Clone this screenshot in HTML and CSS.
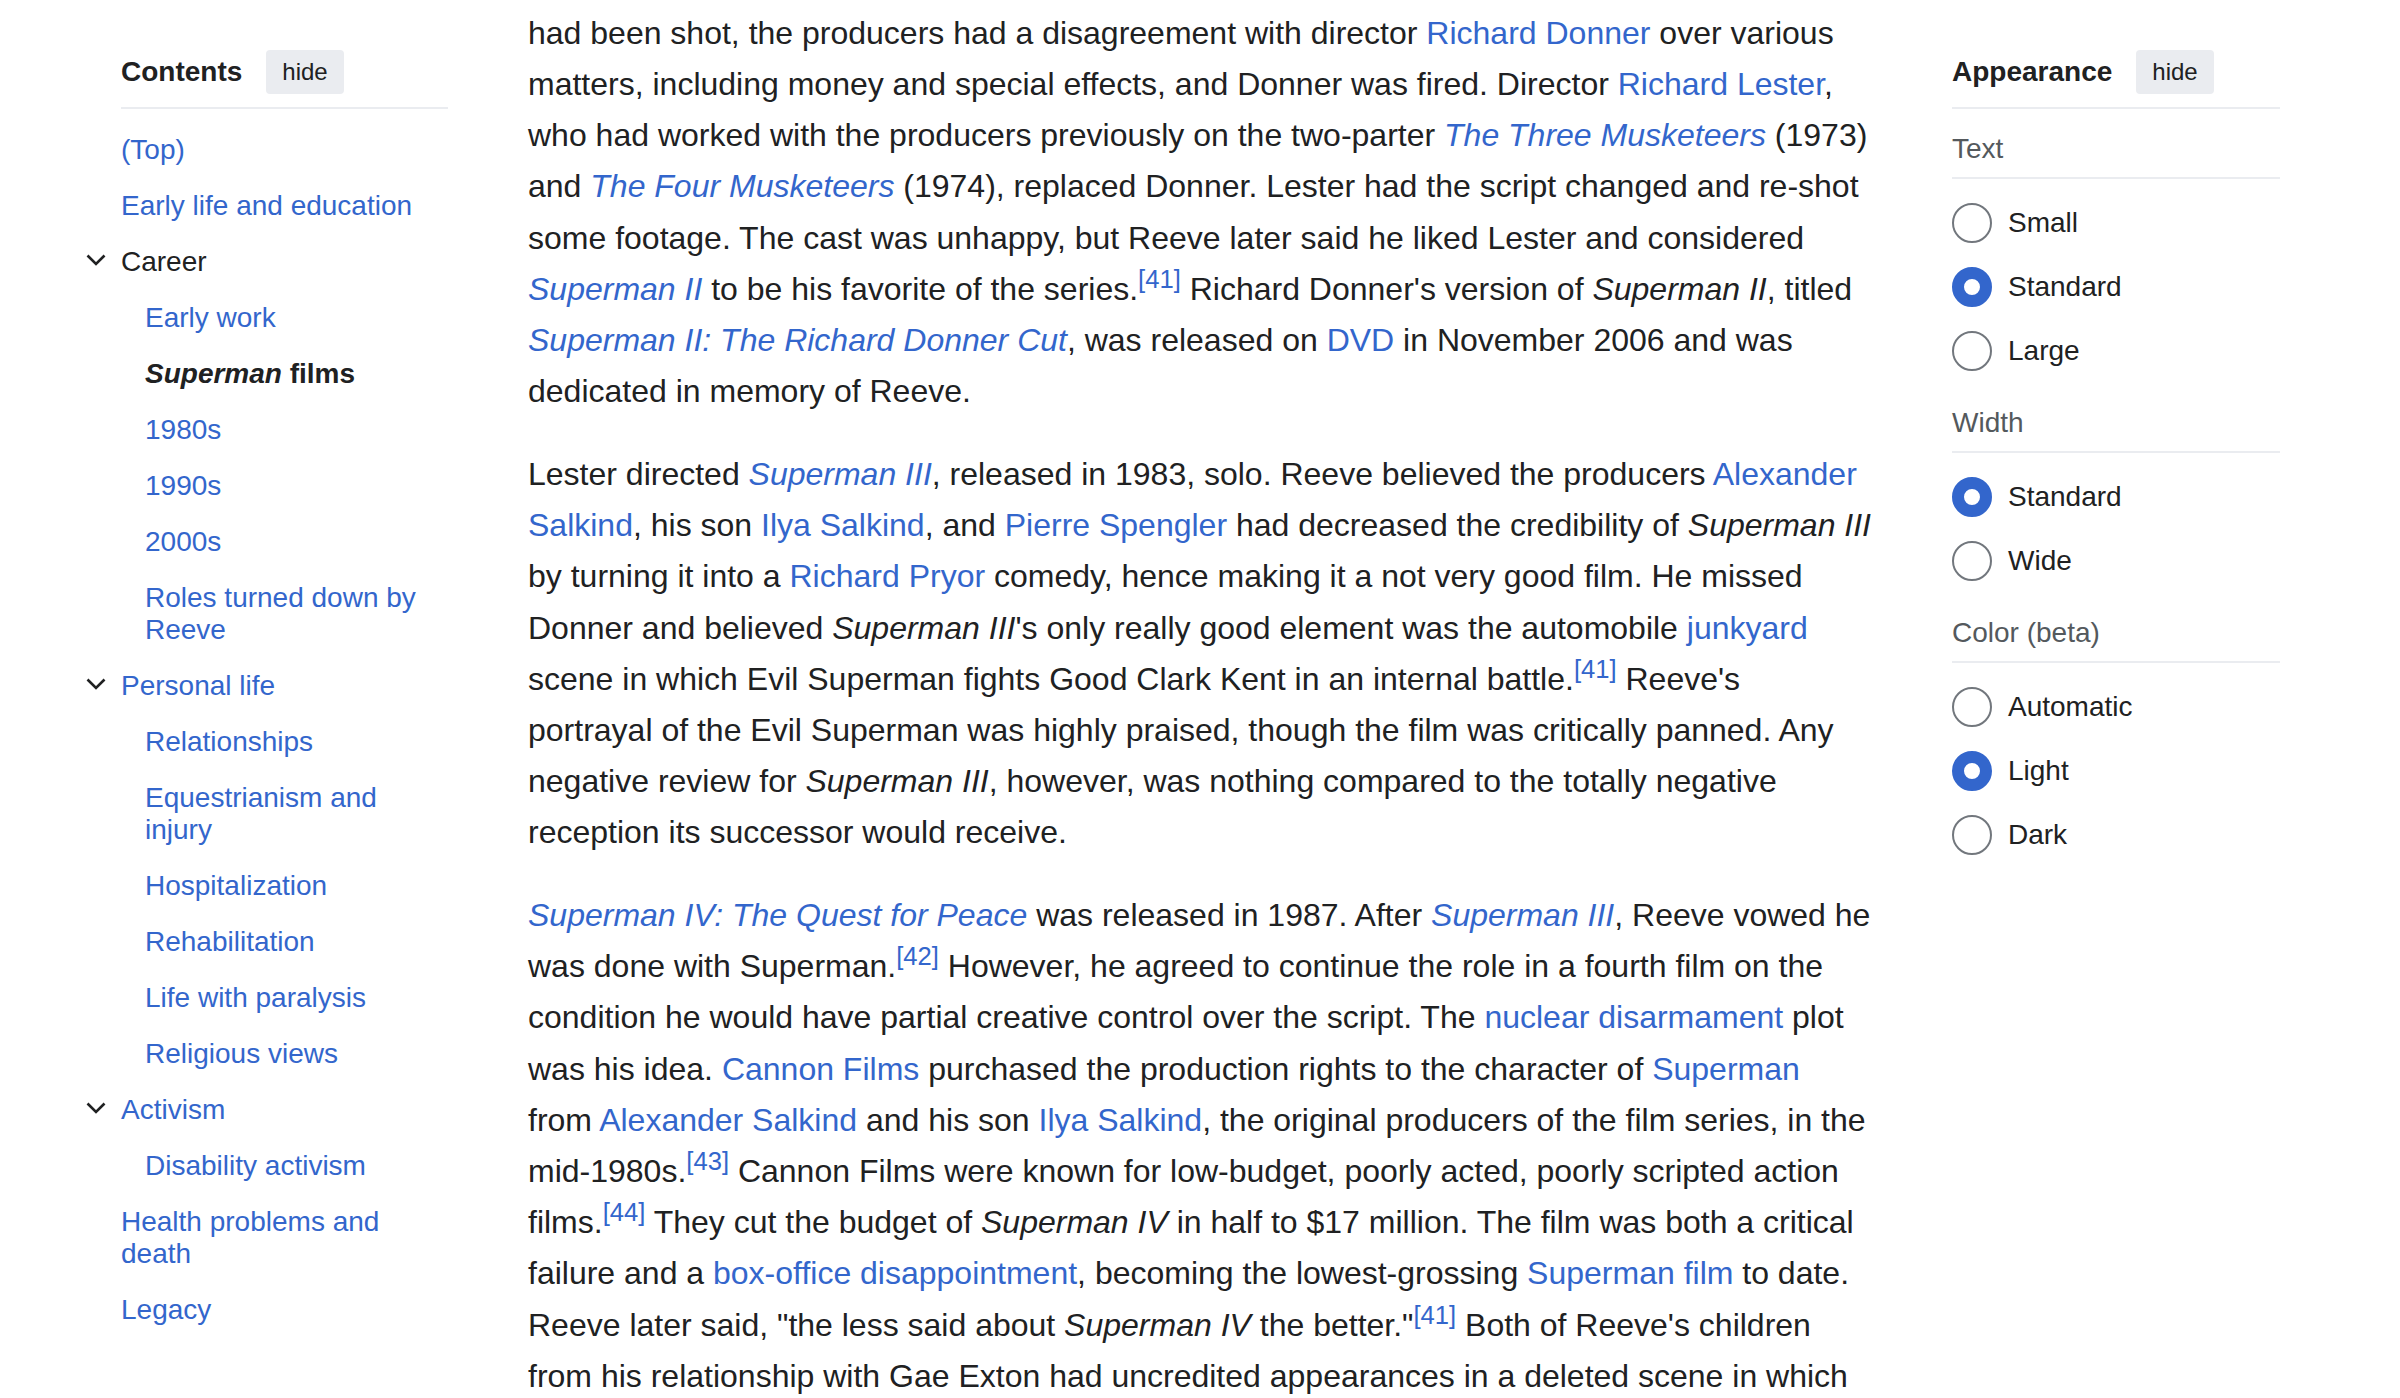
FILE: index.html
```html
<!DOCTYPE html>
<html lang="en">
<head>
<meta charset="utf-8">
<title>Christopher Reeve</title>
<link rel="stylesheet" href="styles.css">
</head>
<body>
<div class="page">
  <nav class="toc">
    <div class="panel-head toc-head">
      <span class="panel-title">Contents</span>
      <button class="hide-btn">hide</button>
    </div>
    <ul class="toc-list">
      <li><div class="toc-row"><span class="toc-toggle"></span><a class="toc-link" href="#">(Top)</a></div></li>
      <li><div class="toc-row"><span class="toc-toggle"></span><a class="toc-link" href="#">Early life and education</a></div></li>
      <li>
        <div class="toc-row"><span class="toc-toggle"><svg width="20" height="12" viewBox="0 0 20 12"><polyline points="1.5,1.5 10,10 18.5,1.5" fill="none" stroke="#202122" stroke-width="2.6"/></svg></span><a class="toc-link toc-parent" href="#">Career</a></div>
        <ul class="toc-sub">
          <li class="toc-row"><a class="toc-link" href="#">Early work</a></li>
          <li class="toc-row"><a class="toc-link toc-active" href="#"><i>Superman</i> films</a></li>
          <li class="toc-row"><a class="toc-link" href="#">1980s</a></li>
          <li class="toc-row"><a class="toc-link" href="#">1990s</a></li>
          <li class="toc-row"><a class="toc-link" href="#">2000s</a></li>
          <li class="toc-row"><a class="toc-link" href="#">Roles turned down by Reeve</a></li>
        </ul>
      </li>
      <li>
        <div class="toc-row"><span class="toc-toggle"><svg width="20" height="12" viewBox="0 0 20 12"><polyline points="1.5,1.5 10,10 18.5,1.5" fill="none" stroke="#202122" stroke-width="2.6"/></svg></span><a class="toc-link" href="#">Personal life</a></div>
        <ul class="toc-sub">
          <li class="toc-row"><a class="toc-link" href="#">Relationships</a></li>
          <li class="toc-row"><a class="toc-link" href="#">Equestrianism and injury</a></li>
          <li class="toc-row"><a class="toc-link" href="#">Hospitalization</a></li>
          <li class="toc-row"><a class="toc-link" href="#">Rehabilitation</a></li>
          <li class="toc-row"><a class="toc-link" href="#">Life with paralysis</a></li>
          <li class="toc-row"><a class="toc-link" href="#">Religious views</a></li>
        </ul>
      </li>
      <li>
        <div class="toc-row"><span class="toc-toggle"><svg width="20" height="12" viewBox="0 0 20 12"><polyline points="1.5,1.5 10,10 18.5,1.5" fill="none" stroke="#202122" stroke-width="2.6"/></svg></span><a class="toc-link" href="#">Activism</a></div>
        <ul class="toc-sub">
          <li class="toc-row"><a class="toc-link" href="#">Disability activism</a></li>
        </ul>
      </li>
      <li><div class="toc-row"><span class="toc-toggle"></span><a class="toc-link" href="#">Health problems and death</a></div></li>
      <li><div class="toc-row"><span class="toc-toggle"></span><a class="toc-link" href="#">Legacy</a></div></li>
    </ul>
  </nav>

  <main class="content">
    <p>had been shot, the producers had a disagreement with director <a href="#">Richard Donner</a> over various matters, including money and special effects, and Donner was fired. Director <a href="#">Richard Lester</a>, who had worked with the producers previously on the two-parter <a href="#"><i>The Three Musketeers</i></a> (1973) and <a href="#"><i>The Four Musketeers</i></a> (1974), replaced Donner. Lester had the script changed and re-shot some footage. The cast was unhappy, but Reeve later said he liked Lester and considered <a href="#"><i>Superman II</i></a> to be his favorite of the series.<sup class="ref"><a href="#">[41]</a></sup> Richard Donner's version of <i>Superman II</i>, titled <a href="#"><i>Superman II: The Richard Donner Cut</i></a>, was released on <a href="#">DVD</a> in November 2006 and was dedicated in memory of Reeve.</p>
    <p>Lester directed <a href="#"><i>Superman III</i></a>, released in 1983, solo. Reeve believed the producers <a href="#">Alexander Salkind</a>, his son <a href="#">Ilya Salkind</a>, and <a href="#">Pierre Spengler</a> had decreased the credibility of <i>Superman III</i> by turning it into a <a href="#">Richard Pryor</a> comedy, hence making it a not very good film. He missed Donner and believed <i>Superman III</i>'s only really good element was the automobile <a href="#">junkyard</a> scene in which Evil Superman fights Good Clark Kent in an internal battle.<sup class="ref"><a href="#">[41]</a></sup> Reeve's portrayal of the Evil Superman was highly praised, though the film was critically panned. Any negative review for <i>Superman III</i>, however, was nothing compared to the totally negative reception its successor would receive.</p>
    <p><a href="#"><i>Superman IV: The Quest for Peace</i></a> was released in 1987. After <a href="#"><i>Superman III</i></a>, Reeve vowed he was done with Superman.<sup class="ref"><a href="#">[42]</a></sup> However, he agreed to continue the role in a fourth film on the condition he would have partial creative control over the script. The <a href="#">nuclear disarmament</a> plot was his idea. <a href="#">Cannon Films</a> purchased the production rights to the character of <a href="#">Superman</a> from <a href="#">Alexander Salkind</a> and his son <a href="#">Ilya Salkind</a>, the original producers of the film series, in the mid-1980s.<sup class="ref"><a href="#">[43]</a></sup> Cannon Films were known for low-budget, poorly acted, poorly scripted action films.<sup class="ref"><a href="#">[44]</a></sup> They cut the budget of <i>Superman IV</i> in half to $17 million. The film was both a critical failure and a <a href="#">box-office disappointment</a>, becoming the lowest-grossing <a href="#">Superman film</a> to date. Reeve later said, "the less said about <i>Superman IV</i> the better."<sup class="ref"><a href="#">[41]</a></sup> Both of Reeve's children from his relationship with Gae Exton had uncredited appearances in a deleted scene in which</p>
  </main>

  <aside class="appearance">
    <div class="panel-head">
      <span class="panel-title">Appearance</span>
      <button class="hide-btn">hide</button>
    </div>
    <div class="group">
      <div class="group-label">Text</div>
      <ul class="options">
        <li class="option"><span class="radio"></span><span>Small</span></li>
        <li class="option"><span class="radio radio-on"></span><span>Standard</span></li>
        <li class="option"><span class="radio"></span><span>Large</span></li>
      </ul>
    </div>
    <div class="group">
      <div class="group-label">Width</div>
      <ul class="options">
        <li class="option"><span class="radio radio-on"></span><span>Standard</span></li>
        <li class="option"><span class="radio"></span><span>Wide</span></li>
      </ul>
    </div>
    <div class="group">
      <div class="group-label">Color (beta)</div>
      <ul class="options">
        <li class="option"><span class="radio"></span><span>Automatic</span></li>
        <li class="option"><span class="radio radio-on"></span><span>Light</span></li>
        <li class="option"><span class="radio"></span><span>Dark</span></li>
      </ul>
    </div>
  </aside>
</div>
</body>
</html>
```

FILE: styles.css
```css
html, body {
  margin: 0;
  padding: 0;
  background: #ffffff;
}

body {
  font-family: "Liberation Sans", Arial, sans-serif;
  color: #202122;
}

a {
  color: #3366cc;
  text-decoration: none;
}

ul {
  list-style: none;
  margin: 0;
  padding: 0;
}

.page {
  display: flex;
  align-items: flex-start;
  width: 2400px;
  height: 1398px;
  overflow: hidden;
}

/* ---------- side panels ---------- */
.toc {
  margin-left: 86px;
  width: 362px;
  flex: none;
}

.panel-head {
  display: flex;
  align-items: center;
  gap: 24px;
  height: 44px;
  margin-top: 50px;
  padding-bottom: 13px;
  border-bottom: 2px solid #eaecf0;
}

.toc-head {
  margin-left: 35px;
}

.panel-title {
  font-size: 28px;
  font-weight: bold;
  line-height: 44px;
  color: #202122;
}

.hide-btn {
  height: 44px;
  padding: 0 16px;
  border: none;
  border-radius: 4px;
  background: #eaecf0;
  color: #202122;
  font-family: "Liberation Sans", Arial, sans-serif;
  font-size: 24px;
  line-height: 44px;
}

.toc-list {
  margin-top: 13px;
  font-size: 28px;
  line-height: 32px;
}

.toc-row {
  display: flex;
  align-items: flex-start;
  padding: 12px 0;
}

.toc-toggle {
  flex: none;
  width: 35px;
  height: 32px;
  display: flex;
  align-items: flex-start;
  padding-top: 8px;
  box-sizing: border-box;
}

.toc-sub {
  padding-left: 59px;
}

.toc-parent {
  color: #202122;
}

.toc-active {
  color: #202122;
  font-weight: bold;
}

/* ---------- main content ---------- */
.content {
  flex: none;
  width: 1344px;
  margin-left: 80px;
  padding-top: 7.8px;
  font-family: "Liberation Sans", Arial, sans-serif;
  font-size: 32px;
  line-height: 51.2px;
  color: #202122;
}

.content p {
  margin: 0 0 31.5px 0;
}

.ref {
  font-size: 80%;
  line-height: 1;
  vertical-align: super;
}

/* ---------- appearance ---------- */
.appearance {
  flex: none;
  width: 328px;
  margin-left: 80px;
}

.group {
  margin-top: 24px;
}

.group-label {
  font-size: 28px;
  line-height: 32px;
  color: #54595d;
  padding-bottom: 12px;
  border-bottom: 2px solid #eaecf0;
}

.options {
  padding-top: 12px;
}

.option {
  display: flex;
  align-items: center;
  gap: 16px;
  padding: 12px 0;
  font-size: 28px;
  line-height: 32px;
  color: #202122;
}

.radio {
  flex: none;
  width: 40px;
  height: 40px;
  box-sizing: border-box;
  border: 2px solid #72777d;
  border-radius: 50%;
  background: #ffffff;
}

.radio-on {
  border: 12px solid #3366cc;
}
```
